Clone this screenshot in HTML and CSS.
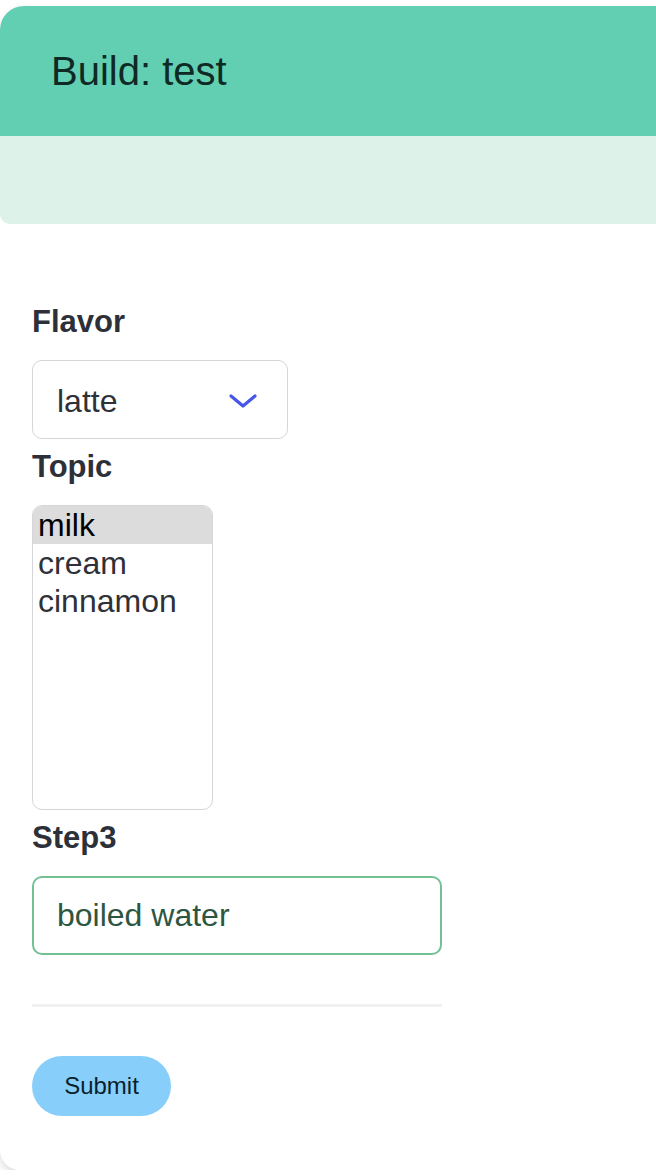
FILE: index.html
```html
<!DOCTYPE html>
<html>
<head>
<meta charset="utf-8">
<link rel="stylesheet" href="styles.css">
</head>
<body>
<div class="card">
  <div class="card-header"><h1 class="title">Build: test</h1></div>
  <div class="card-band"></div>
  <form class="card-body">
    <label class="field-label">Flavor</label>
    <div class="select-wrap">
      <div class="select-box">latte</div>
      <svg class="chevron" width="28" height="14" viewBox="0 0 28 14"><path d="M2 2 L14 12 L26 2" fill="none" stroke="#4756e8" stroke-width="3.2" stroke-linecap="round" stroke-linejoin="round"/></svg>
    </div>
    <label class="field-label">Topic</label>
    <div class="listbox">
      <div class="option selected">milk</div>
      <div class="option">cream</div>
      <div class="option">cinnamon</div>
    </div>
    <label class="field-label">Step3</label>
    <div class="text-input">boiled water</div>
    <div class="divider"></div>
    <button type="button" class="submit">Submit</button>
  </form>
</div>
</body>
</html>
```
FILE: styles.css
```css
html, body {
  margin: 0;
  padding: 0;
  background: #ffffff;
  overflow: hidden;
}
body {
  padding-top: 6px;
  font-family: "Liberation Sans", Arial, sans-serif;
}
.card {
  background: #ffffff;
  border-radius: 24px 0 0 20px;
  box-shadow: 0 4px 8px rgba(0, 0, 0, 0.14);
  display: flex;
  flex-direction: column;
}
.card-header {
  height: 130px;
  background: #62cfb3;
  border-radius: 24px 0 0 0;
  display: flex;
  align-items: center;
  padding-left: 51px;
}
.title {
  margin: 0;
  font-weight: normal;
  font-size: 40px;
  color: #0f2a24;
}
.card-band {
  height: 88px;
  background: #ddf2e9;
  border-radius: 0 0 0 10px;
}
.card-body {
  display: flex;
  flex-direction: column;
  align-items: flex-start;
  padding: 80px 0 54px 32px;
  margin: 0;
}
.field-label {
  font-weight: bold;
  font-size: 31px;
  line-height: 36px;
  color: #2d3039;
  margin-bottom: 20px;
}
.select-wrap {
  position: relative;
  margin-bottom: 10px;
}
.select-box {
  box-sizing: border-box;
  width: 256px;
  height: 79px;
  border: 1.5px solid #d5d5da;
  border-radius: 10px;
  padding: 3px 0 0 24px;
  display: flex;
  align-items: center;
  font-size: 32px;
  color: #2f3138;
}
.chevron {
  position: absolute;
  left: 197px;
  top: 34px;
}
.listbox {
  box-sizing: border-box;
  width: 181px;
  height: 305px;
  border: 1.5px solid #d5d5da;
  border-radius: 10px;
  overflow: hidden;
  margin-bottom: 10px;
  display: flex;
  flex-direction: column;
}
.option {
  height: 38px;
  line-height: 38px;
  padding-left: 5px;
  font-size: 32px;
  color: #2f3138;
}
.option.selected {
  background: #dcdcdc;
  color: #000000;
}
.text-input {
  box-sizing: border-box;
  width: 410px;
  height: 79px;
  border: 2px solid #72c093;
  border-radius: 10px;
  padding-left: 23px;
  display: flex;
  align-items: center;
  font-size: 32px;
  color: #2d5641;
  margin-bottom: 49px;
}
.divider {
  width: 410px;
  height: 3px;
  background: #f1f1f2;
  margin-bottom: 49px;
}
.submit {
  width: 139px;
  height: 60px;
  border: none;
  border-radius: 30px;
  background: #87cffa;
  color: #0b1f2e;
  font-family: "Liberation Sans", Arial, sans-serif;
  font-size: 24px;
  padding: 0;
}
```
